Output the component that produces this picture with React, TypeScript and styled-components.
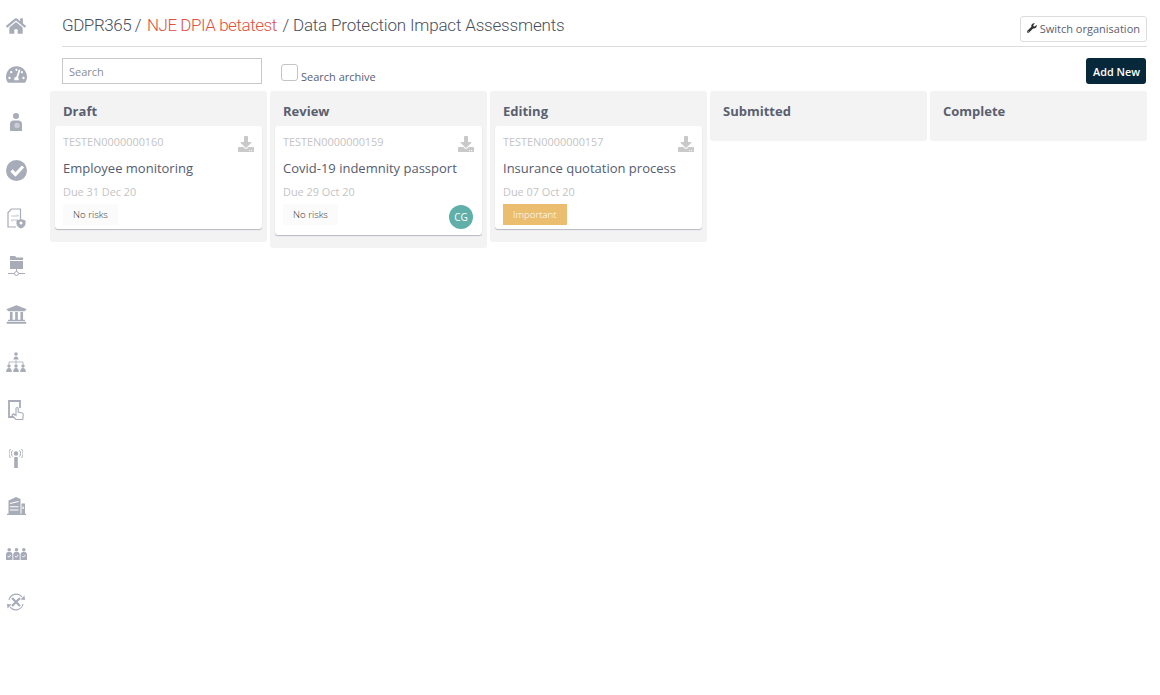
import React from 'react';
import styled, { createGlobalStyle } from 'styled-components';
import { FaHome, FaTachometerAlt, FaUniversity, FaWrench, FaDownload } from 'react-icons/fa';

const GlobalStyle = createGlobalStyle`
    html, body {
        margin: 0;
        padding: 0;
        background: #fff;
        font-family: 'Open Sans', sans-serif;
        color: #4e5468;
    }
`;

const iconColor = '#a8acb8';

const UserGlobeIcon = () => (
    <svg width="14" height="18" viewBox="0 0 14 18">
        <circle cx="7" cy="3" r="3" fill={iconColor} />
        <path d="M1 18v-7c0-2 1.500-3.500 3.500-3.500h5c2 0 3.500 1.500 3.500 3.500v7z" fill={iconColor} />
        <circle cx="8" cy="12.500" r="2.800" fill="#c9ccd4" />
    </svg>
);

const CheckCircleIcon = () => (
    <svg width="21" height="21" viewBox="0 0 21 21">
        <circle cx="10.500" cy="10.500" r="10.500" fill={iconColor} />
        <path d="M5.500 10.500l4 4L17 6.500" stroke="#fff" strokeWidth="3.200" fill="none" />
    </svg>
);

const ContractIcon = () => (
    <svg width="19" height="21" viewBox="0 0 19 21" fill="none">
        <path d="M13.500 11V1H4.500L1 4.500V19H9" stroke={iconColor} strokeWidth="1.200" />
        <path d="M4 8h7.500L10 6.500M11 12H4l1.500 1.500" stroke="#c3c6cf" strokeWidth="1" />
        <path d="M9.500 12.500l4.500-1.500 4.500 1.500v3c0 2.500-2 4-4.500 5-2.500-1-4.500-2.500-4.500-5z" fill={iconColor} />
        <circle cx="14" cy="15" r="1.500" fill="#fff" />
    </svg>
);

const FolderNetworkIcon = () => (
    <svg width="17" height="20" viewBox="0 0 17 20" fill="none">
        <path d="M2 0h5l1.500 1.500H15V4H2z" fill={iconColor} />
        <path d="M2 5h13v8H2z" fill={iconColor} />
        <path d="M0 17.500h6M11 17.500h6" stroke={iconColor} strokeWidth="1" />
        <circle cx="8.500" cy="17.500" r="2" stroke={iconColor} strokeWidth="1" />
        <path d="M8.500 13v2.500" stroke={iconColor} strokeWidth="1" />
    </svg>
);

const HierarchyIcon = () => (
    <svg width="20" height="20" viewBox="0 0 20 20" fill="none">
        <circle cx="10" cy="2" r="1.800" fill={iconColor} />
        <path d="M7.500 7.500c0-2 1-3 2.500-3s2.500 1 2.500 3z" fill={iconColor} />
        <path d="M10 7.500v2.500M3 12v-2h14v2M10 10v2" stroke={iconColor} strokeWidth="0.800" />
        {[3, 10, 17].map(x => (
            <g key={x}>
                <circle cx={x} cy="14" r="1.700" fill={iconColor} />
                <path d={`M${x - 2.800} 20c0-2.500 1-4 2.800-4s2.800 1.500 2.800 4z`} fill={iconColor} />
            </g>
        ))}
    </svg>
);

const TouchIcon = () => (
    <svg width="16" height="20" viewBox="0 0 16 20" fill="none">
        <path d="M12 8V1H1v16h6" stroke={iconColor} strokeWidth="1.800" />
        <path
            d="M6 14l2 1.500V8.500c0-1.400 2.200-1.400 2.200 0v3.500l3.300.7c1.200.3 1.800 1 1.800 2.100l-.5 4.700H8l-3.500-3.500c-1-1.100.3-2.500 1.500-1.500z"
            fill="#fff"
            stroke={iconColor}
            strokeWidth="1.100"
        />
    </svg>
);

const AntennaIcon = () => (
    <svg width="14" height="20" viewBox="0 0 14 20" fill="none">
        <circle cx="7" cy="5.500" r="2.200" fill={iconColor} />
        <path d="M5.200 9h3.600v11H5.200z" fill={iconColor} />
        <path
            d="M3.500 2.500c-1.500 2-1.500 4 0 6M10.500 2.500c1.500 2 1.500 4 0 6M1.500 1c-2 3-2 6 0 9M12.500 1c2 3 2 6 0 9"
            stroke={iconColor}
            strokeWidth="1"
        />
    </svg>
);

const BuildingIcon = () => (
    <svg width="19" height="18" viewBox="0 0 19 18">
        <path d="M1.500 18V3.500L9 0l4.500 2v16zM14.500 6.500H18V18h-3.500zM0 16.800h19V18H0z" fill={iconColor} />
        <path d="M3 6.500l8.500-2M3 9.800h8.500M3 13h8.500" stroke="#fff" strokeWidth="1.100" />
        <path d="M15.500 9.500h1.200v2.500h-1.200z" fill="#fff" />
    </svg>
);

const TeamCheckIcon = () => (
    <svg width="21" height="12" viewBox="0 0 21 12">
        {[3.200, 10.500, 17.800].map(x => (
            <g key={x}>
                <circle cx={x} cy="1.800" r="1.800" fill={iconColor} />
                <path d={`M${x - 3.200} 12V6.500c0-1.500 1-2.500 2-2.500h2.400c1 0 2 1 2 2.500V12z`} fill={iconColor} />
                <path d={`M${x - 1.400} 8l1.100 1.200 1.900-2.200`} stroke="#fff" strokeWidth="0.900" fill="none" />
            </g>
        ))}
    </svg>
);

const CycleCrossIcon = () => (
    <svg width="20" height="18" viewBox="0 0 20 18" fill="none">
        <path d="M3 7A7.500 7.500 0 0 1 16 3.800M17 11A7.500 7.500 0 0 1 4 14.200" stroke={iconColor} strokeWidth="1.100" />
        <path d="M14.500 6.500l4.500.5-.5-4.500zM5.500 11.500l-4.500-.5.500 4.500z" fill={iconColor} />
        <path d="M6 5l8 8M14 5l-8 8" stroke={iconColor} strokeWidth="2.200" />
    </svg>
);

function HomeGlyph() {
    return <FaHome size={20} color={iconColor} />;
}
function GaugeGlyph() {
    return <FaTachometerAlt size={21} color={iconColor} />;
}
function BankGlyph() {
    return <FaUniversity size={21} color={iconColor} />;
}

const navItems = [
    <HomeGlyph key="home" />,
    <GaugeGlyph key="gauge" />,
    <UserGlobeIcon key="user" />,
    <CheckCircleIcon key="check" />,
    <ContractIcon key="contract" />,
    <FolderNetworkIcon key="folder" />,
    <BankGlyph key="bank" />,
    <HierarchyIcon key="hierarchy" />,
    <TouchIcon key="touch" />,
    <AntennaIcon key="antenna" />,
    <BuildingIcon key="building" />,
    <TeamCheckIcon key="team" />,
    <CycleCrossIcon key="cycle" />,
];

type Card = {
    ref: string;
    title: string;
    due: string;
    tag: string;
    important?: boolean;
    avatar?: string;
};

const columns: { name: string; cards: Card[] }[] = [
    {
        name: 'Draft',
        cards: [{ ref: 'TESTEN0000000160', title: 'Employee monitoring', due: 'Due 31 Dec 20', tag: 'No risks' }],
    },
    {
        name: 'Review',
        cards: [
            {
                ref: 'TESTEN0000000159',
                title: 'Covid-19 indemnity passport',
                due: 'Due 29 Oct 20',
                tag: 'No risks',
                avatar: 'CG',
            },
        ],
    },
    {
        name: 'Editing',
        cards: [
            {
                ref: 'TESTEN0000000157',
                title: 'Insurance quotation process',
                due: 'Due 07 Oct 20',
                tag: 'Important',
                important: true,
            },
        ],
    },
    { name: 'Submitted', cards: [] },
    { name: 'Complete', cards: [] },
];

export default function App() {
    return (
        <>
            <GlobalStyle />
            <StyledPage>
                <StyledSidebar>
                    {navItems.map((icon, i) => (
                        <StyledNavItem key={i}>{icon}</StyledNavItem>
                    ))}
                </StyledSidebar>
                <StyledMain>
                    <StyledHeader>
                        <StyledTitle>
                            GDPR365 / <StyledOrg>NJE DPIA betatest</StyledOrg>{' '}
                            <StyledTitleTail>/ Data Protection Impact Assessments</StyledTitleTail>
                        </StyledTitle>
                        <StyledSwitchButton>
                            <FaWrench size={10} color="#333" />
                            Switch organisation
                        </StyledSwitchButton>
                    </StyledHeader>
                    <StyledToolbar>
                        <StyledSearch placeholder="Search" />
                        <StyledArchiveLabel>
                            <StyledCheckbox />
                            Search archive
                        </StyledArchiveLabel>
                        <StyledAddButton>Add New</StyledAddButton>
                    </StyledToolbar>
                    <StyledBoard>
                        {columns.map(column => (
                            <StyledColumn key={column.name}>
                                <StyledColumnTitle>{column.name}</StyledColumnTitle>
                                {column.cards.map(card => (
                                    <StyledCard key={card.ref} $tall={!!card.avatar}>
                                        <StyledCardTop>
                                            <StyledRef>{card.ref}</StyledRef>
                                            <StyledDownload />
                                        </StyledCardTop>
                                        <StyledCardTitle>{card.title}</StyledCardTitle>
                                        <StyledDue>{card.due}</StyledDue>
                                        <StyledTag $important={card.important}>{card.tag}</StyledTag>
                                        {card.avatar && <StyledAvatar>{card.avatar}</StyledAvatar>}
                                    </StyledCard>
                                ))}
                            </StyledColumn>
                        ))}
                    </StyledBoard>
                </StyledMain>
            </StyledPage>
        </>
    );
}

const StyledPage = styled.div`
    display: flex;
    width: 1160px;
    height: 695px;
    overflow: hidden;
    background: #fff;
`;

const StyledSidebar = styled.nav`
    display: flex;
    flex: 0 0 50px;
    flex-direction: column;
    padding-top: 2px;
`;

const StyledNavItem = styled.div`
    display: flex;
    align-items: center;
    justify-content: center;
    width: 32px;
    height: 48px;
`;

const StyledMain = styled.main`
    display: flex;
    flex: 1;
    flex-direction: column;
    padding-right: 13px;
`;

const StyledHeader = styled.header`
    display: flex;
    align-items: flex-start;
    justify-content: space-between;
    height: 46px;
    margin-left: 12px;
    border-bottom: 1px solid #ddd;
`;

const StyledTitle = styled.h1`
    margin: 13px 0 0;
    font-family: 'Roboto', sans-serif;
    font-size: 17px;
    font-weight: 300;
    line-height: 24px;
    letter-spacing: -0.45px;
    color: #4a4f5e;
`;

const StyledOrg = styled.span`
    margin-left: 2px;
    color: #e0503f;
`;

const StyledTitleTail = styled.span`
    margin-left: 2px;
    letter-spacing: -0.18px;
`;

const StyledSwitchButton = styled.button`
    display: flex;
    align-items: center;
    gap: 3px;
    box-sizing: border-box;
    width: 127px;
    height: 26px;
    margin-top: 16px;
    padding: 0 6px 2px;
    border: 1px solid #ddd;
    border-radius: 3px;
    background: #fff;
    font-family: 'Open Sans', sans-serif;
    font-size: 11px;
    white-space: nowrap;
    color: #5a6072;
`;

const StyledToolbar = styled.div`
    display: flex;
    align-items: flex-start;
    height: 44px;
    margin-left: 12px;
`;

const StyledSearch = styled.input`
    box-sizing: border-box;
    width: 200px;
    height: 26px;
    margin-top: 11px;
    padding: 0 6px;
    border: 1px solid #c8c8c8;
    font-family: 'Open Sans', sans-serif;
    font-size: 11px;
    outline: none;

    &::placeholder {
        color: #8a8e99;
    }
`;

const StyledArchiveLabel = styled.label`
    display: flex;
    align-items: flex-end;
    gap: 3px;
    margin: 17px 0 0 19px;
    font-size: 11px;
    line-height: 15px;
    color: #5a6072;
`;

const StyledCheckbox = styled.span`
    display: block;
    box-sizing: border-box;
    width: 17px;
    height: 17px;
    margin-bottom: 3px;
    border: 1px solid #c4c4c4;
    border-radius: 3px;
`;

const StyledAddButton = styled.button`
    box-sizing: border-box;
    width: 60px;
    height: 26px;
    margin: 11px 1px 0 auto;
    padding: 0 0 0 1px;
    border: none;
    border-radius: 3px;
    background: #07283b;
    font-family: 'Open Sans', sans-serif;
    font-size: 10.8px;
    font-weight: 600;
    color: #fff;
`;

const StyledBoard = styled.div`
    display: grid;
    grid-template-columns: repeat(5, 217px);
    gap: 3px;
    align-items: start;
`;

const StyledColumn = styled.section`
    box-sizing: border-box;
    min-height: 50px;
    padding: 0 5px 13px;
    border-radius: 3px;
    background: #f3f3f3;
`;

const StyledColumnTitle = styled.h2`
    margin: 0;
    padding: 12px 8px 6px;
    font-size: 13px;
    font-weight: 700;
    line-height: 17px;
    color: #5a5f70;
`;

const StyledCard = styled.article<{ $tall: boolean }>`
    position: relative;
    box-sizing: border-box;
    height: ${props => (props.$tall ? 109 : 103)}px;
    padding: 8px 8px 0;
    border-radius: 3px;
    background: #fff;
    box-shadow: 0 1px 1px #b5b7c2;
`;

const StyledCardTop = styled.div`
    display: flex;
    justify-content: space-between;
    height: 24px;
`;

const StyledRef = styled.span`
    font-size: 10.9px;
    line-height: 16px;
    color: #c4c4c4;
`;

const StyledDownload = styled(FaDownload)`
    margin: 2px 0 0;
    font-size: 16px;
    color: #c9c9c9;
`;

const StyledCardTitle = styled.div`
    margin-top: 1px;
    font-size: 13px;
    line-height: 18px;
    color: #565c70;
`;

const StyledDue = styled.div`
    margin-top: 7px;
    font-size: 10.9px;
    line-height: 16px;
    color: #c4c4c4;
`;

const StyledTag = styled.span<{ $important?: boolean }>`
    display: inline-block;
    margin-top: 4px;
    padding: 0 10px;
    height: 21px;
    font-size: 9.7px;
    font-weight: 300;
    line-height: 21px;
    background: ${props => (props.$important ? '#ebbd6f' : '#fbfbfb')};
    color: ${props => (props.$important ? '#fff' : '#333')};
`;

const StyledAvatar = styled.div`
    position: absolute;
    right: 9px;
    bottom: 6px;
    width: 24px;
    height: 24px;
    border-radius: 50%;
    background: #60b0a9;
    font-size: 10px;
    line-height: 24px;
    text-align: center;
    color: #fff;
`;
